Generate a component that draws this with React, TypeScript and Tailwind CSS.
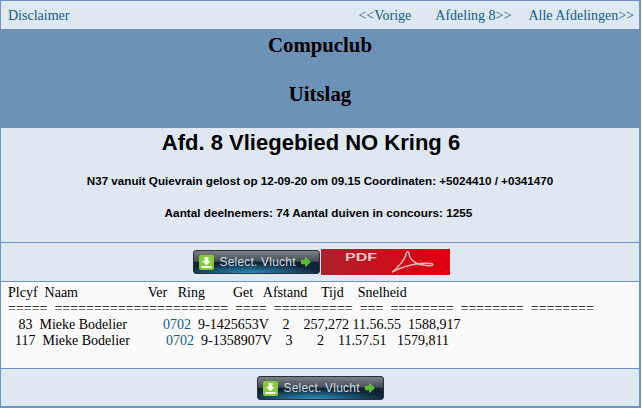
function DownloadIcon() {
  return (
    <svg width="15" height="15" viewBox="0 0 15 15" className="shrink-0">
      <rect x="0" y="0" width="15" height="15" rx="2" fill="#86c93a" />
      <path d="M5.500 2h4v4h2.500L7.500 10.200 3 6h2.500z" fill="#f6ffe8" />
      <rect x="2.500" y="11" width="10" height="2" fill="#f6ffe8" />
    </svg>
  );
}

function ArrowIcon() {
  return (
    <svg width="10" height="10" viewBox="0 0 11 11" className="shrink-0">
      <path d="M0.500 3.500h4.500V0.500L10.500 5.500 5 10.500V7.500H0.500z" fill="#4cc22a" stroke="#9fe05a" strokeWidth="0.600" />
    </svg>
  );
}

function SelectButton() {
  return (
    <a className="flex h-[24px] w-[127px] items-center rounded-[3px] border border-[#2a3138] bg-[radial-gradient(ellipse_55%_45%_at_45%_100%,#2a8fc0_0%,transparent_100%),linear-gradient(#7a8186_0%,#474e55_46%,#0f2233_52%,#10283d_100%)] pl-[5px] font-['Liberation_Sans',sans-serif] text-[12px] tracking-[0.2px] text-[#cfdbe2]">
      <DownloadIcon />
      <span className="ml-[6px] whitespace-pre">Select. Vlucht</span>
      <span className="ml-[5px]">
        <ArrowIcon />
      </span>
    </a>
  );
}

function PdfButton() {
  return (
    <a className="flex h-[26px] w-[129px] items-center bg-[linear-gradient(90deg,#ad1f2c_0%,#c8101e_45%,#e0000f_100%)] font-['Liberation_Sans',sans-serif] text-[10px] font-bold text-[#eccbcb]">
      <span className="ml-[24px] -mt-[9px] inline-block origin-left scale-x-[1.6]">PDF</span>
      <svg width="44" height="22" viewBox="0 0 44 22" className="ml-[25px]" fill="none" stroke="#e8b9bb" strokeWidth="1.500">
        <path d="M2 21C8 17 15 8 16 3C16.500 0 19 0 19 3C19 7 24 12 30 13.500C36 15 43 15 43 13.500C43 12 33 12 26 13C16 14.500 8 18 2 21Z" />
      </svg>
    </a>
  );
}

const rows = [
  { plc: "   83", ver: "0702", ring: "9-1425653V", rest: "    2    257,272 11.56.55  1588,917" },
  { plc: "  117", ver: "0702", ring: "9-1358907V", rest: "    3       2    11.57.51   1579,811" },
];

export default function App() {
  return (
    <div className="h-[408px] w-[642px] overflow-hidden bg-white">
      <div className="h-[408px] w-[641px] border-2 border-[#6b94c0] border-t-[1px] border-l-[1px] bg-[#dfe7f1] font-['Liberation_Serif',serif] text-[14px] text-black">
        <nav className="flex h-[28px] items-center pl-[7px] pr-[5px] text-[#0f5e8c]">
          <a>Disclaimer</a>
          <a className="ml-auto">&lt;&lt;Vorige</a>
          <a className="ml-[24px]">Afdeling 8&gt;&gt;</a>
          <a className="ml-[17px]">Alle Afdelingen&gt;&gt;</a>
        </nav>

        <header className="flex h-[99px] flex-col items-center bg-[#6c92b7] pt-[5px] text-[20.8px] font-bold leading-[21px]">
          <h1>Compuclub</h1>
          <h2 className="mt-[28px]">Uitslag</h2>
        </header>

        <section className="flex h-[115px] flex-col items-center border-b border-[#6b94c0] pt-[3px] font-['Liberation_Sans',sans-serif] font-bold">
          <h3 className="mr-[18px] text-[22px] leading-[24px]">Afd. 8 Vliegebied NO Kring 6</h3>
          <p className="mt-[19px] text-[11.65px] leading-[14px]">N37 vanuit Quievrain gelost op 12-09-20 om 09.15 Coordinaten: +5024410 / +0341470</p>
          <p className="mt-[18px] mr-[3px] text-[11.75px] leading-[14px]">Aantal deelnemers: 74 Aantal duiven in concours: 1255</p>
        </section>

        <div className="flex h-[39px] items-center justify-center gap-[1px] border-b border-[#6b94c0] pl-[2px]">
          <SelectButton />
          <PdfButton />
        </div>

        <div className="h-[87px] border-b border-[#6b94c0] bg-[#fafafa] pl-[7px] pt-[3px] leading-[16px] whitespace-pre">
          <div>Plcyf  Naam                    Ver   Ring        Get   Afstand    Tijd    Snelheid</div>
          <div>=====  ======================  ====  ==========  ===  ========  ========  ========</div>
          {rows.map((row) => (
            <div key={row.plc}>
              {row.plc}  Mieke Bodelier{"          "}
              <a className="ml-[1px] text-[#0f5e8c]">{row.ver}</a>  {row.ring}{row.rest}
            </div>
          ))}
        </div>

        <div className="flex h-[37px] items-center justify-center pt-[1px]">
          <SelectButton />
        </div>
      </div>
    </div>
  );
}
